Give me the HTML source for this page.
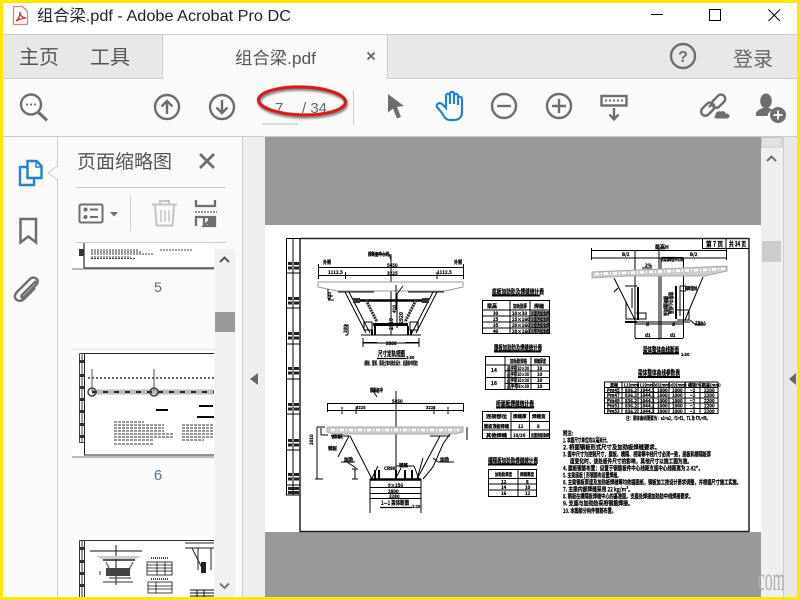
<!DOCTYPE html>
<html><head><meta charset="utf-8"><style>
html,body{margin:0;padding:0;width:800px;height:600px;overflow:hidden;background:#fff}
svg{display:block;position:absolute;left:0;top:0}
text{font-family:"Liberation Sans","Noto Sans CJK SC",sans-serif}
.t{font-family:"Noto Sans CJK SC",sans-serif;font-weight:700;fill:#000;stroke:#000;stroke-width:.22}
.k{stroke:#000;fill:none;stroke-width:1}
.b{stroke:#000;fill:none;stroke-width:2}
.ic{fill:none;stroke:#6e6e6e;stroke-width:2.4}
</style></head><body>
<svg width="800" height="600" viewBox="0 0 800 600">
<defs><filter id="sh" x="-20%" y="-50%" width="140%" height="200%"><feDropShadow dx="1" dy="2" stdDeviation="1" flood-color="#444" flood-opacity=".7"/></filter></defs>
<!-- base -->
<rect width="800" height="600" fill="#fff"/>
<!-- tab bar -->
<rect x="3" y="34" width="794" height="1.500" fill="#ccc"/>
<rect x="3" y="35" width="794" height="43" fill="#e8e8e8"/>
<rect x="162" y="35" width="225" height="44" fill="#f9f9f9"/>
<rect x="162" y="35" width="1" height="44" fill="#ccc"/>
<rect x="387" y="35" width="1" height="44" fill="#ccc"/>
<rect x="3" y="78" width="159" height="1" fill="#ccc"/><rect x="388" y="78" width="409" height="1" fill="#ccc"/>
<!-- toolbar -->
<rect x="3" y="79" width="794" height="57" fill="#fafafa"/>
<rect x="3" y="136" width="794" height="1.500" fill="#ccc"/>
<!-- left panels -->
<rect x="3" y="137" width="240" height="461" fill="#fafafa"/>
<rect x="57" y="137" width="1" height="461" fill="#ccc"/>
<rect x="243" y="137" width="22" height="461" fill="#eee"/>
<rect x="242" y="137" width="1" height="461" fill="#ccc"/>
<!-- main -->
<rect x="265" y="137" width="496" height="461" fill="#999"/>
<rect x="265" y="225" width="496" height="307" fill="#fff"/>
<rect x="761" y="137" width="22" height="461" fill="#efefef"/>
<rect x="783" y="137" width="1" height="461" fill="#ccc"/>
<rect x="784" y="137" width="13" height="461" fill="#e8e8e8"/>
<rect x="761.500" y="137.500" width="20.500" height="9.500" fill="#e2e2e2" stroke="#c4c4c4"/>
<rect x="762" y="241" width="19" height="21" fill="#cdcdcd"/>
<path d="M767 161l4.500-4.500 4.500 4.500" fill="none" stroke="#6e6e6e" stroke-width="2"/>
<path d="M258 373v12l-8-6z" fill="#666"/>
<path d="M796 373v12l-7-6z" fill="#666"/>

<!-- title -->
<g stroke="#e8787c" fill="#fff" stroke-width="1.300"><path d="M14.500 6.500h8l5 5v12a1 1 0 0 1-1 1h-12a1 1 0 0 1-1-1v-16a1 1 0 0 1 1-1z"/></g>
<path d="M16 21c3-2 4-5 4-9 0 3 1 5 6 6-3 0-6 1-10 3z" fill="none" stroke="#d8232a" stroke-width="1.300"/>
<text x="37" y="21" font-size="16" fill="#222" textLength="254" lengthAdjust="spacingAndGlyphs">组合梁.pdf - Adobe Acrobat Pro DC</text>
<rect x="651" y="14" width="12" height="1" fill="#000"/>
<rect x="709.500" y="9.500" width="11" height="11" fill="none" stroke="#000" stroke-width="1"/>
<path d="M768.500 9.500l11.500 11.500M780 9.500l-11.500 11.500" stroke="#000" stroke-width="1" fill="none"/>

<!-- tabs -->
<text x="19" y="64" font-size="20" fill="#555">主页</text>
<text x="90" y="64" font-size="20" fill="#555">工具</text>
<text x="235" y="64" font-size="17" fill="#555" textLength="81" lengthAdjust="spacingAndGlyphs">组合梁.pdf</text>
<path d="M367.500 52.500l7 7M374.500 52.500l-7 7" stroke="#666" stroke-width="1.800" fill="none"/>
<circle cx="683" cy="56" r="12" fill="none" stroke="#6e6e6e" stroke-width="2.400"/>
<text x="683" y="62" font-size="16" font-weight="700" text-anchor="middle" fill="#6e6e6e">?</text>
<text x="733" y="66" font-size="20" fill="#666">登录</text>

<!-- toolbar icons -->
<circle cx="31" cy="104.500" r="10" class="ic"/><path d="M38 112l9 8.500" stroke="#6e6e6e" stroke-width="3" fill="none"/>
<path d="M26 104.500h2M30 104.500h2M34 104.500h2" stroke="#6e6e6e" stroke-width="1.800" fill="none"/>
<circle cx="167" cy="107" r="12" class="ic"/><path d="M167 114v-13M161.500 106.500l5.500-5.500 5.500 5.500" class="ic"/>
<circle cx="222" cy="107" r="12" class="ic"/><path d="M222 100v13M216.500 107.500l5.500 5.500 5.500-5.500" class="ic"/>
<text x="275" y="113" font-size="15" fill="#666">7</text>
<text x="302" y="113" font-size="15" fill="#666">/ 34</text>
<ellipse cx="302" cy="101" rx="43.500" ry="14" fill="none" stroke="#d41f1f" stroke-width="3.200" filter="url(#sh)" transform="rotate(1.500 302 101)"/>
<rect x="262" y="123.500" width="36" height="1" fill="#bbb"/>
<rect x="353" y="90" width="1" height="35" fill="#ccc"/>
<path d="M388 94l16 12-7 1 4 10-4 1.500-4-10-5 4z" fill="#6e6e6e"/>
<path d="M437 107l5 6c2 4 4 7 8 7h4c5 0 8-3 8-8v-13c0-3-4-3-4 0v6-9c0-3-4-3-4 0v8-10c0-3-4-3-4 0v10-8c0-3-4-3-4 0v12l-4-4c-3-2-6 0-5 3z" fill="none" stroke="#2680d0" stroke-width="2.200"/>
<circle cx="504" cy="106" r="12" class="ic"/><path d="M497 106h14" class="ic"/>
<circle cx="559" cy="106" r="12" class="ic"/><path d="M552 106h14M559 99v14" class="ic"/>
<rect x="601.500" y="96" width="25" height="9.500" fill="#fafafa" stroke="#6e6e6e" stroke-width="2.400"/>
<path d="M605 100.500h18" stroke="#6e6e6e" stroke-width="2" stroke-dasharray="2 2" fill="none"/>
<path d="M614 108v11M609.500 114.500l4.500 5 4.500-5" class="ic"/>
<g fill="none" stroke="#6e6e6e" stroke-width="2.400"><rect x="700" y="105" width="15" height="8.500" rx="4.200" transform="rotate(-45 707.500 109)"/><rect x="711" y="97" width="15" height="8.500" rx="4.200" transform="rotate(-45 718.500 101)"/><path d="M713 103l-4 4"/></g>
<path d="M716 119c-2 0-3-3-1-4 0-3 3-5 6-4 2-1 5 0 5 2 2 0 5 2 4 4-1 1-1 2-3 2z" fill="#6e6e6e" stroke="#fafafa"/>
<ellipse cx="766" cy="101" rx="5.800" ry="7.500" fill="#6e6e6e"/>
<path d="M756 116v-2.500c0-2.500 4-4.500 7-5.500h6l4 2c-3 1-5 3-5.500 6z" fill="#6e6e6e"/>
<circle cx="778" cy="115" r="8" fill="#6e6e6e"/><path d="M773.500 115h9M778 110.500v9" stroke="#fff" stroke-width="1.800"/>

<!-- left rail -->
<g fill="none" stroke="#2680d0" stroke-width="2.400"><path d="M27.500 161h9l5 5v12h-14z"/><path d="M27 167h-7v18h14v-6"/></g>
<path d="M36 161v6h5" fill="none" stroke="#2680d0" stroke-width="1.500"/>
<path d="M57 166l-8.500 7 8.500 6.500" fill="#fafafa" stroke="#ccc"/>
<rect x="57" y="167" width="2" height="12" fill="#fafafa"/>
<path d="M20.500 219h15.500v23.500l-7.700-6-7.800 6z" fill="none" stroke="#6e6e6e" stroke-width="2.500"/>
<path d="M37 281l-13 13c-3 3-1 5 1 3l12-12c5-5-2-10-6-6l-13 13c-6 6 2 12 7 7l11-11" fill="none" stroke="#6e6e6e" stroke-width="2.400" transform="translate(-1 0)"/>

<!-- panel head -->
<text x="77" y="168" font-size="19" fill="#555" textLength="95">页面缩略图</text>
<path d="M200 154l14 14M214 154l-14 14" stroke="#6e6e6e" stroke-width="2.800" fill="none"/>
<rect x="76" y="187" width="150" height="1" fill="#ccc"/>
<rect x="79.500" y="204.500" width="23" height="18" rx="1.500" fill="none" stroke="#6e6e6e" stroke-width="2"/>
<circle cx="85.500" cy="209.500" r="2" fill="#6e6e6e"/><circle cx="85.500" cy="217" r="2" fill="#6e6e6e"/>
<path d="M90 209.500h8M90 217h8" stroke="#6e6e6e" stroke-width="2"/>
<path d="M110 212h8l-4 4.500z" fill="#6e6e6e"/>
<rect x="130" y="196" width="1" height="35" fill="#ccc"/>
<g fill="none" stroke="#c4c4c4" stroke-width="2"><path d="M152 204.500h25M160 204v-3h9v3M155 205l1.500 20.500h16l1.500-20.500"/><path d="M161 210v12M165 210v12M169 210v12" stroke-width="1.500"/></g>
<g fill="none" stroke="#6e6e6e" stroke-width="2.300"><path d="M196 200v6h19v-6M196 226v-9h8l0 9M196 217h19v9h-11l6-6"/></g>
<path d="M195 212h22" stroke="#6e6e6e" stroke-width="1.600" stroke-dasharray="2 1" fill="none"/>
<path d="M208 218l7 0v8h-7z" fill="#6e6e6e"/>
<rect x="76" y="242" width="150" height="1" fill="#ccc"/>

<!-- thumb 5 -->
<rect x="72" y="243" width="142" height="25" fill="#fff"/>
<rect x="72" y="268" width="142" height="2" fill="#bbb"/>
<path d="M84 243v25M84 268h130" stroke="#000" fill="none"/>
<rect x="79" y="249" width="5" height="7" fill="#333"/>
<g stroke="#000" fill="none" stroke-width=".8" stroke-dasharray="2 1"><path d="M91 250h48M91 252h50M91 254h63M91 257h40M91 258.500h45M160 250h32"/></g>
<text x="158" y="292" font-size="14" text-anchor="middle" fill="#666">5</text>

<!-- thumb 6 -->
<rect x="72" y="349" width="142" height="107" fill="#fff"/>
<rect x="72" y="456" width="142" height="2" fill="#bbb"/><rect x="72" y="349" width="142" height="1" fill="#e4e4e4"/>
<path d="M84.500 353.500h129.500M84.500 353.500v101.500h129.500" stroke="#222" fill="none"/>
<path d="M79.500 353.500h5M79.500 353.500v89h5M82 353v89" stroke="#444" fill="none"/>
<g fill="#333"><rect x="79" y="360" width="5" height="3"/><rect x="79" y="374" width="5" height="3"/><rect x="79" y="386" width="5" height="3"/><rect x="79" y="398" width="5" height="3"/><rect x="79" y="410" width="5" height="3"/><rect x="79" y="423" width="5" height="3"/><rect x="79" y="435" width="5" height="3"/></g>
<rect x="92" y="389.500" width="122" height="5" fill="#bbb"/>
<path d="M92 392h122" stroke="#111" stroke-width="1.800" stroke-dasharray="5 6" fill="none"/>
<circle cx="92" cy="392" r="4" fill="none" stroke="#444" stroke-width="1.500"/><circle cx="154" cy="392" r="4" fill="none" stroke="#444" stroke-width="1.500"/>
<path d="M88 378h126" stroke="#666" stroke-dasharray="2 2" stroke-width="2" fill="none"/><path d="M92 369v22M154 369v22" stroke="#555" fill="none"/>
<path d="M156 410h12M199 406h14M197 417h17" stroke="#000" stroke-width="2" fill="none"/>
<g stroke="#333" fill="none" stroke-width="1.100" stroke-dasharray="3 1"><path d="M114 422h30M114 425h50M114 428h50M114 431h50M114 434h60M114 437h60M114 440h40M114 444h40M182 425h32M182 428h32M182 431h32M182 434h32M182 437h32M182 440h22"/></g>
<text x="158" y="480" font-size="15" text-anchor="middle" fill="#557799">6</text>

<!-- thumb 7 -->
<rect x="72" y="536" width="142" height="62" fill="#fff"/>
<path d="M79.500 540.500h134.500M84.500 540.500v57M79.500 540.500v57M82 540.500v57" stroke="#333" fill="none"/>
<g fill="#333"><rect x="79" y="547" width="5" height="3"/><rect x="79" y="560" width="5" height="3"/><rect x="79" y="572" width="5" height="3"/><rect x="79" y="584" width="5" height="3"/></g>
<path d="M90 551h52M116 545v40" stroke="#111" fill="none"/>
<path d="M96 556h45l-5 3h-35z" fill="#ccc"/>
<path d="M103 560h32" stroke="#222" stroke-width="1.500" fill="none"/>
<path d="M106 562l6 12M133 562l-6 12" stroke="#777" stroke-width="1.500" fill="none"/>
<rect x="106" y="568" width="24" height="8" fill="#444"/>
<path d="M100 571v4M109 578h22M103 582h30" stroke="#333" fill="none"/>
<g fill="none" stroke="#111" stroke-width=".8"><rect x="147" y="562" width="25" height="13"/><path d="M147 565h25M147 568h25M147 571h25M157 562v13M165 562v13"/><rect x="148" y="582" width="24" height="11"/><path d="M148 586h24M148 589h24M156 582v11"/></g>
<path d="M151 558h17M151 579h17" stroke="#444" stroke-dasharray="1 1" fill="none" stroke-width="2"/>
<path d="M185 543h29M185 548h29M198 548v22M211 548v22M192 548l10 20" stroke="#222" fill="none"/>
<rect x="201" y="562" width="5" height="11" fill="#222"/>
<path d="M190 590h24M190 593h24M190 596h24M197 590v7M204 590v7" stroke="#111" fill="none"/>
<!-- panel scrollbar -->
<rect x="215" y="249" width="20" height="349" fill="#f0f0f0"/>
<rect x="215" y="312" width="20" height="20" fill="#999"/>
<path d="M220 262l4.500-4.500 4.500 4.500" fill="none" stroke="#555" stroke-width="2"/>
<path d="M220 583.500l4.500 4.500 4.500-4.500" fill="none" stroke="#777" stroke-width="2"/>

<!-- ============ drawing ============ -->
<g>
<path d="M286.500 238.500h13.500M286.500 238.500v256.500h13.500M293 238.500v256.500" class="k"/>
<path d="M300 238.500h449M749 238v294M300 238v294M300 531.500h449" stroke="#222" stroke-width="1.500" fill="none"/>
<path d="M287 273h13M287 308h13M287 344h13M287 379h13M287 414h13M287 450h13M287 485h13" class="k"/>
<g fill="#222"><rect x="288" y="262" width="4" height="3"/><rect x="288" y="266.500" width="4" height="3"/><rect x="294" y="262" width="5" height="3"/><rect x="294" y="266.500" width="5" height="3"/><rect x="288" y="297" width="4" height="3"/><rect x="288" y="301.500" width="4" height="3"/><rect x="294" y="297" width="5" height="3"/><rect x="294" y="301.500" width="5" height="3"/><rect x="288" y="332" width="4" height="3"/><rect x="288" y="336.500" width="4" height="3"/><rect x="294" y="332" width="5" height="3"/><rect x="294" y="336.500" width="5" height="3"/><rect x="288" y="367" width="4" height="3"/><rect x="288" y="371.500" width="4" height="3"/><rect x="294" y="367" width="5" height="3"/><rect x="294" y="371.500" width="5" height="3"/><rect x="288" y="403" width="4" height="3"/><rect x="288" y="407.500" width="4" height="3"/><rect x="294" y="403" width="5" height="3"/><rect x="294" y="407.500" width="5" height="3"/><rect x="288" y="439" width="4" height="3"/><rect x="288" y="443.500" width="4" height="3"/><rect x="294" y="439" width="5" height="3"/><rect x="294" y="443.500" width="5" height="3"/><rect x="288" y="473" width="4" height="3"/><rect x="288" y="477.500" width="4" height="3"/><rect x="294" y="473" width="5" height="3"/><rect x="294" y="477.500" width="5" height="3"/><rect x="288" y="487" width="11" height="3"/><rect x="288" y="491" width="11" height="3"/></g>
<!-- page title box -->
<path d="M702.500 238.500v10h46M726 238.500v10" class="k"/>
<text class="t" x="706" y="246.500" font-size="7" textLength="17" lengthAdjust="spacingAndGlyphs">第 7 页</text>
<text class="t" x="729" y="246.500" font-size="7" textLength="17" lengthAdjust="spacingAndGlyphs">共 34 页</text>

<!-- section A -->
<path d="M318.500 264v15M463.500 264v15M318.500 267.500h145M318.500 275.500h145M345.500 272v7M437 272v7M391 254v81" class="k"/>
<path d="M372 254h17l2 6" class="k"/>
<text class="t" x="368" y="256" font-size="5" textLength="21" lengthAdjust="spacingAndGlyphs">横断面中心线</text>
<text class="t" x="323" y="264" font-size="5" textLength="8" lengthAdjust="spacingAndGlyphs">外侧</text>
<text class="t" x="454" y="264" font-size="5" textLength="8" lengthAdjust="spacingAndGlyphs">外侧</text>
<text class="t" x="387" y="267" font-size="4.500">5450</text>
<text class="t" x="328" y="274" font-size="4.500">1112.5</text>
<text class="t" x="387" y="275" font-size="4.500">3225</text>
<text class="t" x="437" y="274" font-size="4.500">1112.5</text>
<path d="M318 282h145v5l-18 4h-108l-19-4z" fill="#fff" stroke="#999" stroke-width="1"/>
<path d="M338 292h36M408 292h36M345 292l21 41M349 292l21 41M437 292l-21 41M433 292l-21 41" class="k" stroke-width=".8"/>
<path d="M353 300.500h75" stroke="#000" stroke-width="2.500" fill="none"/>
<rect x="353" y="298" width="7" height="5" fill="#333"/><rect x="422" y="298" width="7" height="5" fill="#333"/>
<path d="M373 324.500h35" stroke="#000" stroke-width="3" fill="none"/>
<path d="M366 300l11 22M416 300l-11 22" stroke="#333" stroke-width="3" fill="none" stroke-dasharray="2 .7"/>
<path d="M333 296h-5v-7M328 300h6M348 325h-3v-1M348 335h-3M348 324.500v10M364 322h8v8h-8zM410 322h8v8h-8z" class="k"/>
<path d="M361 335h60M363 343h56M363 338v9M419 338v9M363 342.500h14M405 342.500h14" class="k"/>
<path d="M372 330v5M375 326v9M408 326v9M411 330v5" class="b" stroke-width="1.300"/>
<path d="M396 285v25M403 286l-6 8v34" class="k"/>
<text class="t" x="386" y="345" font-size="4.500">2800</text>
<text class="t" x="379" y="296" font-size="4.500" transform="rotate(-90 396 296)">410</text>
<text class="t" x="381" y="318" font-size="5" transform="rotate(-90 393 318)">2310</text>
<text class="t" x="397" y="318" font-size="5" transform="rotate(-90 403 318)">2920</text>
<text class="t" x="331" y="300" font-size="4.500" transform="rotate(-90 331 300)">420</text>
<text class="t" x="347" y="333" font-size="4.500" transform="rotate(-90 347 333)">300</text>
<text class="t" x="378" y="356" font-size="7" textLength="27" lengthAdjust="spacingAndGlyphs">尺寸定轨规图</text>
<text class="t" x="406" y="359" font-size="4">1:50</text>
<path d="M377 358.500h29" stroke="#000" stroke-width="1.300" fill="none"/>
<text class="t" x="364" y="365" font-size="5" textLength="54" lengthAdjust="spacingAndGlyphs">(钢板、型钢、混凝土等均按此设计、此图纸中规定)</text>

<!-- section B -->
<path d="M396 391v89M327.500 403v9M463.500 403v9M327.500 403.500h136M327.500 410.500h136M342 407v7M356 407v7M434 407v7M448 407v7" class="k"/>
<path d="M378 391h-5l4 6" class="k"/>
<text class="t" x="378" y="392" font-size="5" transform="translate(-8 0)" textLength="13" lengthAdjust="spacingAndGlyphs">横断面中</text>
<text class="t" x="392" y="403" font-size="4.500">5450</text>
<text class="t" x="356" y="409" font-size="4">3225</text><text class="t" x="426" y="409" font-size="4">3225</text>
<path d="M327 427h136v5l-8 2h-121l-7-2z" fill="#ccc" stroke="#aaa"/>
<path d="M331 430h128" stroke="#fff" stroke-width="2.500" stroke-dasharray="4 2 1 2" fill="none"/>
<path d="M350 436l22 43M440 436l-23 43M423 458l-6 21M450 434l-7 10-10 23-10 12" class="k" stroke-width="1.100"/>
<path d="M340 436h9l-11 21M430 436h20" class="k" stroke-width=".8"/>
<path d="M370 479.500h51" stroke="#000" stroke-width="2.500" fill="none"/>
<path d="M317 427v52M315 479h8M317 427h8M321 428v7M328 435h-7M358 469h-3v10M352 469h6M352 479h6M467 427v13" class="k"/>
<path d="M370 479v34M421 479v34M370 487.500h51M370 493.500h51M370 498.500h51M370 490v6M421 490v6" class="k"/>
<text class="t" x="388" y="487" font-size="4.500">9×250</text>
<text class="t" x="388" y="493" font-size="4.500">2800</text><text class="t" x="389" y="498" font-size="4.500">3280</text>
<path d="M375 470v9M379 470v9M396 470v9M405 470v9M412 470v9" class="b" stroke-width="1.200"/>
<path d="M378 466l-6 12M396 466h18M397 476l4-8M414 466l5 13" class="k" stroke-width=".7"/>
<text class="t" x="384" y="470" font-size="4.500">CR80</text>
<text class="t" x="399" y="467" font-size="4.500">钢筋</text>
<text class="t" x="331" y="438" font-size="4" textLength="12" lengthAdjust="spacingAndGlyphs">钢板</text>
<text class="t" x="329" y="449" font-size="4.500" transform="rotate(-90 319 455)">2010</text>
<text class="t" x="328" y="450" font-size="4.500">钢板</text>
<text class="t" x="344" y="461" font-size="4.500">加劲</text>
<path d="M341 462h14M347 462l9 6" class="k"/>
<text class="t" x="440" y="461" font-size="4.500">加劲</text>
<path d="M438 462h16M433 458l5 4" class="k"/>
<text class="t" x="381" y="505" font-size="6" textLength="28" lengthAdjust="spacingAndGlyphs">1—1 梁体断面</text>
<text class="t" x="412" y="508" font-size="4">1:25</text>
<path d="M380 507.500h32" stroke="#000" stroke-width="1.300" fill="none"/>

<!-- mid tables -->
<text class="t" x="492" y="294" font-size="7" textLength="52" lengthAdjust="spacingAndGlyphs">底板加劲肋及焊缝统计表</text>
<path d="M492 295.500h48" class="b" stroke-width="1.200"/>
<path d="M482.500 300.500h67v33h-67zM482.500 310h67M482.500 316h67M482.500 322h67M482.500 328h67M510 300.500v33M530 300.500v33" class="k"/>
<text class="t" x="487" y="308" font-size="5">梁高</text><text class="t" x="513" y="308" font-size="5" textLength="14" lengthAdjust="spacingAndGlyphs">加劲肋厚</text><text class="t" x="534" y="308" font-size="5">焊缝</text>
<text class="t" x="493" y="315" font-size="4.500">30</text><text class="t" x="493" y="321" font-size="4.500">25</text><text class="t" x="493" y="327" font-size="4.500">35</text><text class="t" x="493" y="333" font-size="4.500">40</text>
<text class="t" x="512" y="315" font-size="4.500">10×30</text><text class="t" x="512" y="321" font-size="4.500">25×160</text><text class="t" x="512" y="327" font-size="4.500">20×160</text><text class="t" x="512" y="333" font-size="4.500">20×160</text>
<text class="t" x="531" y="315" font-size="4.500" textLength="18" lengthAdjust="spacingAndGlyphs">双面连续角焊</text><text class="t" x="531" y="321" font-size="4.500" textLength="18" lengthAdjust="spacingAndGlyphs">双面连续角焊</text><text class="t" x="531" y="327" font-size="4.500" textLength="18" lengthAdjust="spacingAndGlyphs">双面连续角焊</text><text class="t" x="531" y="333" font-size="4.500" textLength="18" lengthAdjust="spacingAndGlyphs">双面连续角焊</text>
<text class="t" x="494" y="350" font-size="7" textLength="48" lengthAdjust="spacingAndGlyphs">腹板加劲肋及焊缝统计表</text>
<path d="M494 351.500h47" class="b" stroke-width="1.200"/>
<path d="M485.500 356.500h64v33h-64zM485.500 365h64M505 371h44.500M485.500 377.500h64M505 383.500h44.500M505 356.500v33M531 356.500v33" class="k"/>
<text class="t" x="510" y="363" font-size="5" textLength="17" lengthAdjust="spacingAndGlyphs">加劲肋规格</text><text class="t" x="534" y="363" font-size="5" textLength="12" lengthAdjust="spacingAndGlyphs">焊缝厚度</text>
<text class="t" x="491" y="372" font-size="5">14</text><text class="t" x="491" y="385" font-size="5">16</text>
<text class="t" x="507" y="370" font-size="4.500" textLength="22" lengthAdjust="spacingAndGlyphs">品字形10×30</text><text class="t" x="507" y="376" font-size="4.500" textLength="22" lengthAdjust="spacingAndGlyphs">品字形10×30</text><text class="t" x="507" y="382" font-size="4.500" textLength="22" lengthAdjust="spacingAndGlyphs">品字形10×30</text><text class="t" x="507" y="388" font-size="4.500" textLength="22" lengthAdjust="spacingAndGlyphs">品字形8×30</text>
<text class="t" x="537" y="370" font-size="4.500">10</text><text class="t" x="537" y="376" font-size="4.500">10</text><text class="t" x="537" y="382" font-size="4.500">10</text><text class="t" x="537" y="388" font-size="4.500">10</text>
<text class="t" x="496" y="406" font-size="7" textLength="38" lengthAdjust="spacingAndGlyphs">桥面板焊缝统计表</text>
<path d="M496 407.500h38" class="b" stroke-width="1.200"/>
<path d="M482.500 411.500h67v27h-67zM482.500 421.500h67M482.500 430h67M511 411.500v27M529.500 411.500v27" class="k"/>
<text class="t" x="486" y="418" font-size="4.500" textLength="21" lengthAdjust="spacingAndGlyphs">连接部位</text><text class="t" x="513" y="418" font-size="4.500">焊缝厚</text><text class="t" x="532" y="418" font-size="4.500">焊缝宽</text>
<text class="t" x="484" y="428" font-size="4.500" textLength="25" lengthAdjust="spacingAndGlyphs">腹板顶板焊缝</text><text class="t" x="518" y="428" font-size="4.500">12</text><text class="t" x="537" y="428" font-size="4.500">8</text>
<text class="t" x="486" y="437" font-size="4.500" textLength="21" lengthAdjust="spacingAndGlyphs">其他焊缝</text><text class="t" x="513" y="437" font-size="4.500">10/20</text><text class="t" x="531" y="437" font-size="4.500" textLength="18" lengthAdjust="spacingAndGlyphs">双面连续角焊</text>
<text class="t" x="488" y="463" font-size="7" textLength="50" lengthAdjust="spacingAndGlyphs">横隔板加劲肋焊缝统计表</text>
<path d="M488 464.500h49" class="b" stroke-width="1.200"/>
<path d="M488.500 469.500h48v27h-48zM488.500 478.500h48M488.500 484h48M488.500 490h48M518 469.500v27" class="k"/>
<text class="t" x="495" y="476" font-size="4.500" textLength="17" lengthAdjust="spacingAndGlyphs">加劲肋厚度</text><text class="t" x="520" y="476" font-size="4.500" textLength="14" lengthAdjust="spacingAndGlyphs">焊缝厚度</text>
<text class="t" x="501" y="483.500" font-size="4.500">12</text><text class="t" x="526" y="483.500" font-size="4.500">8</text><text class="t" x="501" y="489" font-size="4.500">14</text><text class="t" x="525" y="489" font-size="4.500">10</text><text class="t" x="501" y="495" font-size="4.500">16</text><text class="t" x="525" y="495" font-size="4.500">12</text>

<!-- section C -->
<path d="M591.500 248v12M726.500 248v12M591.500 250.500h135M591.500 258h135M635 250v88M683.500 258v80M659 248v92M661 258v80M635 324h48M635 338.500h48" class="k"/>
<text class="t" x="655" y="249" font-size="5">梁高H</text>
<text class="t" x="622" y="256" font-size="4.500">B/2</text><text class="t" x="690" y="256" font-size="4.500">B/2</text>
<path d="M662 257.500h20" class="k"/>
<text class="t" x="661" y="261" font-size="4.500" textLength="22" lengthAdjust="spacingAndGlyphs">桥梁横断面中心线</text>
<path d="M592 272l135-6 0 5-22 5h-78l-35 2z" fill="#ccc" stroke="#aaa"/>
<path d="M595 274l130-5" stroke="#fff" stroke-width="2.500" stroke-dasharray="4 2 1 2" fill="none"/>
<path d="M614 278l21 42M703 277l-18 43M618 288l-4 4M625 286h12M680 286h6M626 301v18h20v-6h-10M676 310h13v10h-12M625 322h65" class="k"/>
<path d="M638 287v33M676 286v33" stroke="#000" stroke-width="2" fill="none"/>
<path d="M632 288v20M680 286v30" stroke="#000" stroke-width="1" fill="none"/>
<path d="M625 322h12" stroke="#000" stroke-width="2" fill="none"/>
<path d="M690 320l6 5h9" class="k"/>
<text class="t" x="695" y="325" font-size="4.500" textLength="11" lengthAdjust="spacingAndGlyphs">支座中心</text>
<text class="t" x="685" y="290" font-size="4.500" textLength="12" lengthAdjust="spacingAndGlyphs">横断面线</text>
<path d="M686 291h-6" class="k"/>
<text class="t" x="645" y="267" font-size="4.500">2%</text>
<path d="M642 268h10" class="k"/>
<text class="t" x="648" y="287" font-size="5" transform="rotate(90 656 300)" textLength="22" lengthAdjust="spacingAndGlyphs">箱梁中心线高</text>
<text class="t" x="660" y="300" font-size="5" transform="rotate(90 664 300)" textLength="20" lengthAdjust="spacingAndGlyphs">横断面线高</text>
<text class="t" x="646" y="326" font-size="4.500">d</text><text class="t" x="672" y="326" font-size="4.500">d</text><text class="t" x="645" y="337" font-size="4.500">d1</text><text class="t" x="670" y="337" font-size="4.500">d1</text>
<text class="t" x="643" y="352" font-size="7" textLength="36" lengthAdjust="spacingAndGlyphs">梁体整体曲线断面</text>
<text class="t" x="681" y="356" font-size="4">1:50</text>
<path d="M643 353.500h36" class="b" stroke-width="1.200"/>
<text class="t" x="638" y="375" font-size="7" textLength="42" lengthAdjust="spacingAndGlyphs">梁体整体曲线参数表</text>
<path d="M638 377h42" class="b" stroke-width="1.200"/>
<path d="M604.500 382h113.500v31.500h-113.500zM604.500 387.500h113.500M604.500 392.500h113.500M604.500 398h113.500M604.500 403h113.500M604.500 408.500h113.500M622 382v31.500M638 382v31.500M653 382v31.500M669 382v31.500M685 382v31.500M700 382v31.500" class="k"/>
<text class="t" x="610" y="386.500" font-size="4">里程</text><text class="t" x="624" y="386.500" font-size="4">L1(mm)</text><text class="t" x="640" y="386.500" font-size="4">L2(mm)</text><text class="t" x="655" y="386.500" font-size="4">d1(mm)</text><text class="t" x="671" y="386.500" font-size="4">d2(mm)</text><text class="t" x="688" y="386.500" font-size="4">横坡(%)</text><text class="t" x="702" y="386.500" font-size="4">梁高(mm)</text>
<text class="t" x="607" y="392" font-size="4.500">Pm45</text><text class="t" x="625" y="392" font-size="4.500">836.2</text><text class="t" x="640" y="392" font-size="4.500">1044.1</text><text class="t" x="657" y="392" font-size="4.500">1000</text><text class="t" x="672" y="392" font-size="4.500">1000</text><text class="t" x="690" y="392" font-size="4.500">−2</text><text class="t" x="704" y="392" font-size="4.500">2200</text>
<text class="t" x="607" y="397" font-size="4.500">Pm47</text><text class="t" x="625" y="397" font-size="4.500">836.2</text><text class="t" x="640" y="397" font-size="4.500">1044.1</text><text class="t" x="657" y="397" font-size="4.500">1000</text><text class="t" x="672" y="397" font-size="4.500">1000</text><text class="t" x="690" y="397" font-size="4.500">−2</text><text class="t" x="704" y="397" font-size="4.500">2200</text>
<text class="t" x="607" y="402.500" font-size="4.500">Pm49</text><text class="t" x="625" y="402.500" font-size="4.500">836.2</text><text class="t" x="640" y="402.500" font-size="4.500">1044.1</text><text class="t" x="657" y="402.500" font-size="4.500">1000</text><text class="t" x="672" y="402.500" font-size="4.500">1000</text><text class="t" x="690" y="402.500" font-size="4.500">−2</text><text class="t" x="704" y="402.500" font-size="4.500">2200</text>
<text class="t" x="607" y="407.500" font-size="4.500">Pm51</text><text class="t" x="625" y="407.500" font-size="4.500">836.2</text><text class="t" x="640" y="407.500" font-size="4.500">1044.1</text><text class="t" x="657" y="407.500" font-size="4.500">1000</text><text class="t" x="672" y="407.500" font-size="4.500">1000</text><text class="t" x="690" y="407.500" font-size="4.500">−2</text><text class="t" x="704" y="407.500" font-size="4.500">2200</text>
<text class="t" x="607" y="413" font-size="4.500">Pm53</text><text class="t" x="625" y="413" font-size="4.500">836.2</text><text class="t" x="640" y="413" font-size="4.500">1044.1</text><text class="t" x="657" y="413" font-size="4.500">1000</text><text class="t" x="672" y="413" font-size="4.500">1000</text><text class="t" x="690" y="413" font-size="4.500">−2</text><text class="t" x="704" y="413" font-size="4.500">2200</text>
<text class="t" x="626" y="420" font-size="5" textLength="84" lengthAdjust="spacingAndGlyphs">注：梁体曲线要素为：a1=a2，f1=f2，TL 及 f7L=f8。</text>

<!-- notes -->
<text class="t" x="563" y="435.500" font-size="6" textLength="10" lengthAdjust="spacingAndGlyphs">附注:</text>
<text class="t" x="563" y="442.500" font-size="6" textLength="47" lengthAdjust="spacingAndGlyphs">1. 本图尺寸单位均以毫米计。</text>
<text class="t" x="563" y="449.500" font-size="6" textLength="97" lengthAdjust="spacingAndGlyphs">2. 桥面钢板形式尺寸及加劲板焊缝要求。</text>
<text class="t" x="563" y="456.500" font-size="6" textLength="148" lengthAdjust="spacingAndGlyphs">3. 图中尺寸为控制尺寸，腹板、横隔、桥梁等中线尺寸必须一致，底板和横隔板厚</text>
<text class="t" x="570" y="463.500" font-size="6" textLength="122" lengthAdjust="spacingAndGlyphs">度变化时，该处板件尺寸的影响，其他尺寸以施工图为准。</text>
<text class="t" x="563" y="470.500" font-size="6" textLength="140" lengthAdjust="spacingAndGlyphs">4. 腹板钢筋布置：设置于钢筋板件中心线距支座中心线距离为 2.42"。</text>
<text class="t" x="563" y="477.500" font-size="6" textLength="58" lengthAdjust="spacingAndGlyphs">5. 主梁底板 [ 形钢筋布设置焊缝。</text>
<text class="t" x="563" y="484.500" font-size="6" textLength="178" lengthAdjust="spacingAndGlyphs">6. 主梁钢板厚度及加劲板焊缝等均依据图纸，钢板加工按设计要求调整，并根据尺寸施工实施。</text>
<text class="t" x="563" y="491.500" font-size="6" textLength="70" lengthAdjust="spacingAndGlyphs">7. 主梁内部焊缝采用 22 kg/m³。</text>
<text class="t" x="563" y="498.500" font-size="6" textLength="130" lengthAdjust="spacingAndGlyphs">8. 钢板在横隔板焊缝中心的基准面。支座处焊接加劲肋中线焊接要求。</text>
<text class="t" x="563" y="505.500" font-size="6" textLength="70" lengthAdjust="spacingAndGlyphs">9. 支座与加劲肋采用钢筋焊接。</text>
<text class="t" x="563" y="513" font-size="6" textLength="53" lengthAdjust="spacingAndGlyphs">10. 本图部分构件钢筋布置。</text>
</g>

<!-- watermark -->
<text x="758" y="590" font-size="33" style="font-family:'Liberation Serif',serif" fill="#b0b0b0" transform="translate(758 590) scale(.47 1) translate(-758 -590)">com</text>

<!-- yellow frame -->
<rect x="0" y="0" width="800" height="3" fill="#ffe800"/>
<rect x="0" y="0" width="3" height="600" fill="#ffe800"/>
<rect x="797" y="0" width="3" height="600" fill="#ffe800"/>
<rect x="0" y="597" width="800" height="3" fill="#ffe800"/>
</svg>
</body></html>
